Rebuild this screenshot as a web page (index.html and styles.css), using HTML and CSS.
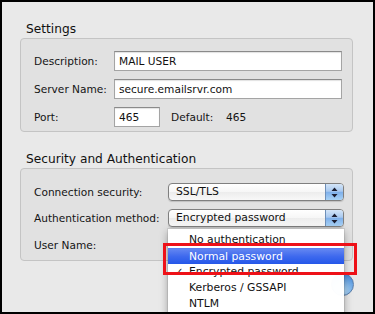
FILE: index.html
```html
<!DOCTYPE html>
<html>
<head>
<meta charset="utf-8">
<link rel="stylesheet" href="styles.css">
</head>
<body>
<div class="frame">
  <h2 class="section-title">Settings</h2>
  <div class="group settings">
    <div class="row">
      <span class="label">Description:</span>
      <div class="field wide">MAIL USER</div>
    </div>
    <div class="row">
      <span class="label">Server Name:</span>
      <div class="field wide">secure.emailsrvr.com</div>
    </div>
    <div class="row">
      <span class="label">Port:</span>
      <div class="field port">465</div>
      <span class="default-label">Default:</span>
      <span class="default-value">465</span>
    </div>
  </div>

  <h2 class="section-title">Security and Authentication</h2>
  <div class="group security">
    <div class="row">
      <span class="label">Connection security:</span>
      <div class="popup">
        <span class="popup-text">SSL/TLS</span>
        <span class="popup-cap">
          <svg width="7" height="11" viewBox="0 0 7 11"><path d="M3.5 0.5 L6.5 4 L0.5 4 Z M0.5 7 L6.5 7 L3.5 10.5 Z" fill="#1c1f33"/></svg>
        </span>
      </div>
    </div>
    <div class="row">
      <span class="label">Authentication method:</span>
      <div class="popup">
        <span class="popup-text">Encrypted password</span>
        <span class="popup-cap">
          <svg width="7" height="11" viewBox="0 0 7 11"><path d="M3.5 0.5 L6.5 4 L0.5 4 Z M0.5 7 L6.5 7 L3.5 10.5 Z" fill="#1c1f33"/></svg>
        </span>
      </div>
    </div>
    <div class="row user-row">
      <span class="label">User Name:</span>
    </div>
  </div>

  <div class="help-button"></div>

  <ul class="menu">
    <li class="menu-item">No authentication</li>
    <li class="menu-item selected">Normal password</li>
    <li class="menu-item checked"><span class="check">✓</span>Encrypted password</li>
    <li class="menu-item">Kerberos / GSSAPI</li>
    <li class="menu-item">NTLM</li>
  </ul>

  <div class="callout"></div>
</div>
</body>
</html>
```

FILE: styles.css
```css
html, body {
  margin: 0;
  padding: 0;
  background: #000;
}

.frame {
  position: relative;
  box-sizing: border-box;
  width: 375px;
  height: 314px;
  border: 2px solid #000;
  background: #e9e9e9;
  overflow: hidden;
  font-family: "DejaVu Sans", sans-serif;
  color: #141414;
  display: flex;
  flex-direction: column;
}

.section-title {
  margin: 19px 0 1px 24px;
  font-size: 12.2px;
  font-weight: normal;
  line-height: 16px;
  height: 16px;
  color: #111;
}

.group {
  margin: 0 20px 0 18px;
  border: 1px solid #c4c4c4;
  border-radius: 4px;
  background: #e1e1e1;
  display: flex;
  flex-direction: column;
  gap: 8px;
  padding-left: 13px;
}

.settings {
  padding-top: 12px;
  padding-bottom: 4px;
}

.security {
  padding-top: 14px;
  padding-bottom: 5px;
}

.row {
  display: flex;
  align-items: center;
  height: 20px;
  font-size: 10.6px;
}

.security .row {
  height: 18px;
}

.security .user-row {
  height: 20px;
}

.label {
  flex: none;
  width: 80px;
}

.security .label {
  width: 134px;
}

.field {
  box-sizing: border-box;
  height: 20px;
  background: #fff;
  border: 1px solid #a4a4a4;
  border-top-color: #8a8a8a;
  box-shadow: inset 0 1px 1px rgba(0,0,0,0.12);
  padding-left: 4px;
  line-height: 18px;
  font-size: 10.6px;
  color: #111;
}

.field.wide {
  width: 228px;
}

.field.port {
  width: 46px;
}

.default-label {
  margin-left: 11px;
  width: 55px;
}

.popup {
  box-sizing: border-box;
  width: 176px;
  height: 18px;
  display: flex;
  border: 1px solid #7f7f7f;
  border-radius: 4px;
  background: linear-gradient(#ffffff, #f6f6f6 50%, #ececec 51%, #f8f8f8);
  box-shadow: 0 1px 1px rgba(0,0,0,0.15);
  overflow: hidden;
}

.popup-text {
  flex: 1;
  padding-left: 7px;
  line-height: 16px;
  font-size: 10.8px;
  color: #111;
}

.popup-cap {
  flex: none;
  width: 17px;
  display: flex;
  align-items: center;
  justify-content: center;
  border-left: 1px solid #6e8fb8;
  background: linear-gradient(#d4e5f8, #a9c9ef 45%, #7fb0ea 52%, #a8d2f6 100%);
}

.help-button {
  position: absolute;
  left: 329px;
  top: 271px;
  width: 23px;
  height: 23px;
  border-radius: 50%;
  border: 1px solid #5c7fab;
  box-sizing: border-box;
  background: radial-gradient(circle at 50% 80%, #bfe2fb 0, #7fb6ec 45%, #4d8fdc 80%);
}

.menu {
  position: absolute;
  left: 166px;
  top: 227px;
  width: 176px;
  margin: 0;
  padding: 3px 0 10px;
  list-style: none;
  background: rgba(255,255,255,0.98);
  box-shadow: 0 3px 9px rgba(0,0,0,0.35), 0 0 0 1px rgba(0,0,0,0.08);
  border-radius: 0 0 4px 4px;
}

.menu-item {
  position: relative;
  height: 16px;
  line-height: 16px;
  padding-left: 21px;
  font-size: 10.8px;
  color: #111;
}

.menu-item.selected {
  color: #fff;
  background: linear-gradient(#6386f1, #3e69ee 50%, #2457e9);
  border-top: 1px solid #5a7ef0;
  box-sizing: border-box;
  line-height: 15px;
}

.check {
  position: absolute;
  left: 7px;
  top: 0;
  font-size: 10px;
}

.callout {
  position: absolute;
  left: 161px;
  top: 241px;
  width: 188px;
  height: 26px;
  border: 3px solid #ee1118;
}
```
